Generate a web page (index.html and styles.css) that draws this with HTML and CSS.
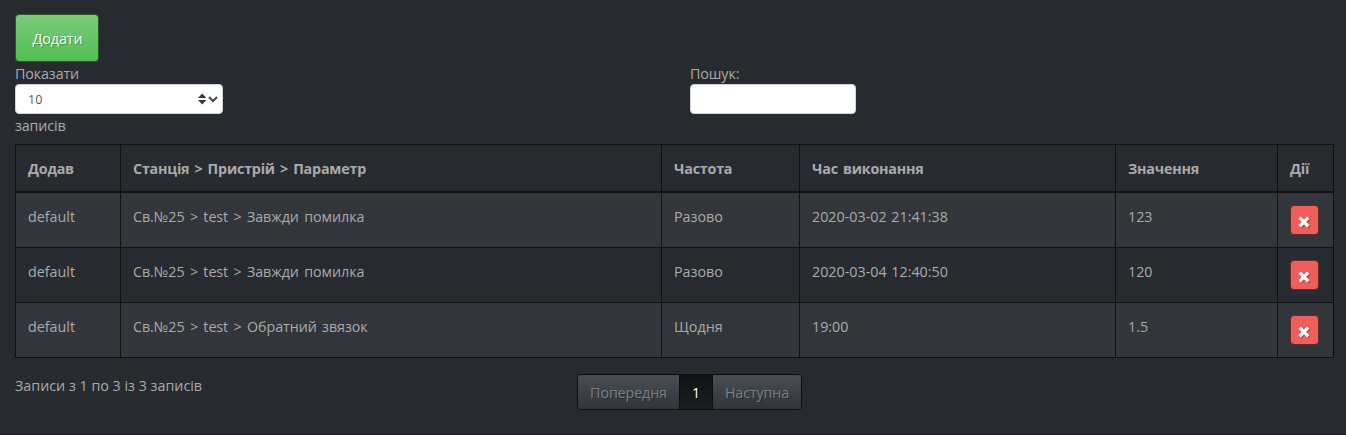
FILE: index.html
```html
<!DOCTYPE html>
<html lang="uk">
<head>
<meta charset="utf-8">
<title>Розклад</title>
<link rel="stylesheet" href="styles.css">
</head>
<body>
<main class="page">
  <button class="btn-add" type="button"><span>Додати</span></button>
  <div class="controls">
    <div class="length">
      <div class="line"><span>Показати</span></div>
      <div class="select"><span>10</span>
        <svg class="carets" width="20" height="12" viewBox="0 0 20 12"><path d="M0 5L4.2.5 8.4 5zM0 7L4.2 11.5 8.4 7z" fill="#343a40"/><path d="M11 4l4 4 4-4" fill="none" stroke="#444" stroke-width="2"/></svg>
      </div>
      <div class="line last"><span>записів</span></div>
    </div>
    <div class="filter">
      <div class="line"><span>Пошук:</span></div>
      <input class="search" type="text" aria-label="Пошук">
    </div>
  </div>
  <table class="table">
    <colgroup><col class="c1"><col class="c2"><col class="c3"><col class="c4"><col class="c5"><col class="c6"></colgroup>
    <thead><tr><th>Додав</th><th>Станція &gt; Пристрій &gt; Параметр</th><th>Частота</th><th>Час виконання</th><th>Значення</th><th>Дії</th></tr></thead>
    <tbody>
      <tr><td>default</td><td>Св.№25 &gt; test &gt; Завжди помилка</td><td>Разово</td><td>2020-03-02 21:41:38</td><td>123</td><td><button class="btn-del" type="button" aria-label="Видалити"><svg width="12" height="12" viewBox="0 0 12 12"><path d="M1.700 1.700l8.600 8.600M10.300 1.700l-8.600 8.600"/></svg></button></td></tr>
      <tr><td>default</td><td>Св.№25 &gt; test &gt; Завжди помилка</td><td>Разово</td><td>2020-03-04 12:40:50</td><td>120</td><td><button class="btn-del" type="button" aria-label="Видалити"><svg width="12" height="12" viewBox="0 0 12 12"><path d="M1.700 1.700l8.600 8.600M10.300 1.700l-8.600 8.600"/></svg></button></td></tr>
      <tr><td>default</td><td>Св.№25 &gt; test &gt; Обратний звязок</td><td>Щодня</td><td>19:00</td><td>1.5</td><td><button class="btn-del" type="button" aria-label="Видалити"><svg width="12" height="12" viewBox="0 0 12 12"><path d="M1.700 1.700l8.600 8.600M10.300 1.700l-8.600 8.600"/></svg></button></td></tr>
    </tbody>
  </table>
  <div class="footer">
    <div class="info"><span>Записи з 1 по 3 із 3 записів</span></div>
    <div class="pages"><span class="pg prev">Попередня</span><span class="pg active">1</span><span class="pg next">Наступна</span></div>
  </div>
</main>
</body>
</html>
```
FILE: styles.css
```css
* { box-sizing: border-box; }
body {
  margin: 0;
  height: 435px;
  overflow: hidden;
  background: #272b30;
  color: #aaa;
  font: 14.3px/22px "Open Sans", "Noto Sans", sans-serif;
}
.page { height: 435px; padding: 14px 12px 0 15px; border-bottom: 1px solid #1c1e22; }
.btn-add {
  display: block;
  width: 84px;
  height: 48px;
  padding: 2px 0 0 1px;
  border: 1px solid #2a5a2a;
  border-radius: 4px;
  background: linear-gradient(#7aca7a, #62c462 60%, #53be53);
  color: #fff;
  font: inherit;
  letter-spacing: -.1px;
  text-shadow: 1px 1px 1px rgba(0, 0, 0, .3);
}
.controls { display: grid; grid-template-columns: 675px 1fr; height: 82px; }
.line { height: 22px; padding-top: 1px; letter-spacing: -.12px; }
.select {
  display: flex;
  align-items: center;
  justify-content: space-between;
  width: 208px;
  height: 30px;
  padding: 0 4px 0 12px;
  border: 1px solid #ced4da;
  border-radius: 4px;
  background: #fff;
  color: #52575c;
  font-size: 12.5px;
}
.select span { padding-top: 1px; }
.search { display: block; width: 166px; height: 30px; border: 1px solid #ced4da; border-radius: 4px; background: #fff; }
.table {
  table-layout: fixed;
  width: 1319px;
  border-spacing: 0;
  border-right: 1px solid #0f1113;
  border-bottom: 1px solid #0f1113;
}
.c1 { width: 105px; }
.c2 { width: 541px; }
.c3 { width: 138px; }
.c4 { width: 316px; }
.c5 { width: 162px; }
.c6 { width: 56px; }
th, td {
  height: 55px;
  padding: 13px 12px 0;
  border-left: 1px solid #0f1113;
  border-top: 1px solid #0f1113;
  text-align: left;
  vertical-align: top;
  white-space: nowrap;
}
th { height: 47px; letter-spacing: -.2px; word-spacing: 1.6px; }
td:nth-child(2) { letter-spacing: -.06px; word-spacing: 1.7px; }
td:nth-child(4) { word-spacing: 1px; }
td:last-child { padding-top: 12px; }
tbody tr:first-child td { height: 56px; border-top-width: 2px; }
tbody tr:nth-child(odd) { background: #323539; }
.btn-del {
  display: flex;
  align-items: center;
  justify-content: center;
  width: 29px;
  height: 30px;
  padding: 3px 1px 0 0;
  border: 1px solid #632b2c;
  border-radius: 4px;
  background: #ee5f5b;
}
.btn-del path { fill: none; stroke: #fff; stroke-width: 3.2; }
.btn-del svg { filter: drop-shadow(1px 1px 0 rgba(0, 0, 0, .3)); }
.footer { display: grid; grid-template-columns: 562px auto; padding-top: 16px; }
.info { padding-top: 1px; }
.pages { display: flex; height: 36px; width: 225px; border: 1px solid #0d0e10; border-radius: 4px; overflow: hidden; }
.pg {
  display: flex;
  align-items: center;
  justify-content: center;
  padding-top: 2px;
  background: linear-gradient(#484e55, #3a3f44 60%, #313539);
  color: #7a8288;
  letter-spacing: -.12px;
  text-shadow: 1px 1px 1px rgba(0, 0, 0, .3);
}
.prev { width: 101px; }
.active { width: 34px; border: solid #0d0e10; border-width: 0 1px; background: linear-gradient(#101112, #17191b 60%, #1b1e20); color: #fff; }
.next { flex: 1; }
```
